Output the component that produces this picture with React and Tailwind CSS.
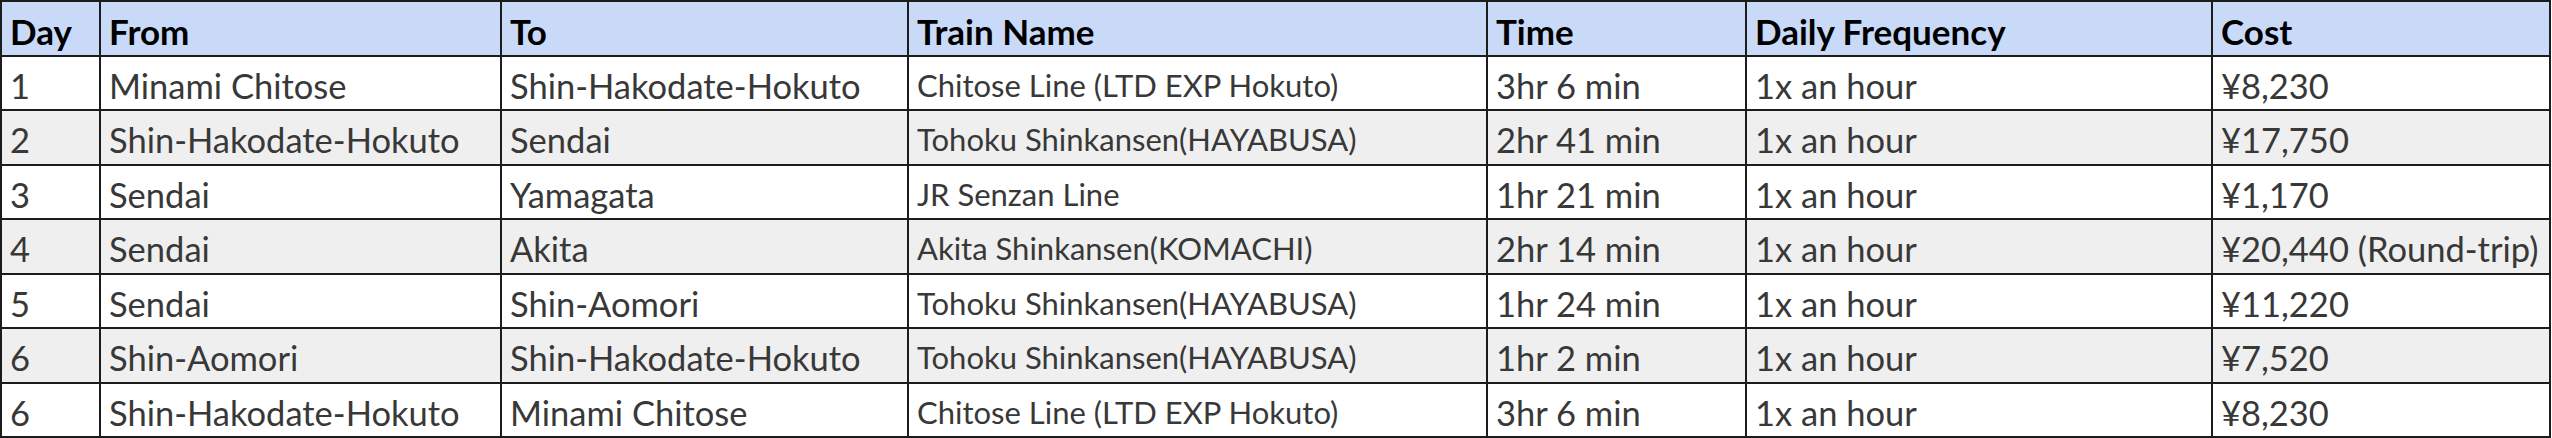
const columns = ["Day", "From", "To", "Train Name", "Time", "Daily Frequency", "Cost"];

const rows = [
  ["1", "Minami Chitose", "Shin-Hakodate-Hokuto", "Chitose Line (LTD EXP Hokuto)", "3hr 6 min", "1x an hour", "¥8,230"],
  ["2", "Shin-Hakodate-Hokuto", "Sendai", "Tohoku Shinkansen(HAYABUSA)", "2hr 41 min", "1x an hour", "¥17,750"],
  ["3", "Sendai", "Yamagata", "JR Senzan Line", "1hr 21 min", "1x an hour", "¥1,170"],
  ["4", "Sendai", "Akita", "Akita Shinkansen(KOMACHI)", "2hr 14 min", "1x an hour", "¥20,440 (Round-trip)"],
  ["5", "Sendai", "Shin-Aomori", "Tohoku Shinkansen(HAYABUSA)", "1hr 24 min", "1x an hour", "¥11,220"],
  ["6", "Shin-Aomori", "Shin-Hakodate-Hokuto", "Tohoku Shinkansen(HAYABUSA)", "1hr 2 min", "1x an hour", "¥7,520"],
  ["6", "Shin-Hakodate-Hokuto", "Minami Chitose", "Chitose Line (LTD EXP Hokuto)", "3hr 6 min", "1x an hour", "¥8,230"],
];

export default function App() {
  return (
    <div className="w-[2552px] h-[438px] bg-white font-['Lato',sans-serif]">
      <div className="grid w-[2551px] h-[438px] grid-cols-[97px_399px_405px_577px_257px_464px_336px] grid-rows-[repeat(8,1fr)] gap-[2px] p-[2px] bg-[#1c1c1c]">
        {columns.map((c) => (
          <div key={c} className="flex items-end bg-[#c9daf8] pl-[8px] pb-[3px] text-[35px] font-bold text-black leading-[1.2] whitespace-nowrap overflow-hidden">
            {c}
          </div>
        ))}
        {rows.map((r, i) =>
          r.map((cell, j) => (
            <div
              key={i + "-" + j}
              className={
                (i % 2 === 1 ? "bg-[#efefef] " : "bg-white ") +
                (j === 3 ? "text-[31px] pb-[5px] " : "text-[34.5px] pb-[3px] ") +
                "flex items-end pl-[8px] text-[#383838] leading-[1.2] whitespace-nowrap overflow-hidden"
              }
            >
              {cell}
            </div>
          ))
        )}
      </div>
    </div>
  );
}
